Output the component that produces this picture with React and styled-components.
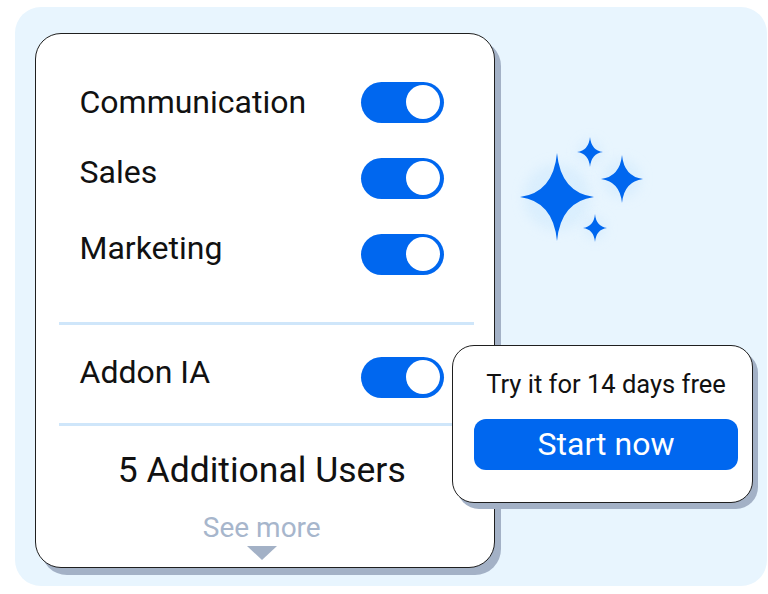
import React from 'react';
import styled, { createGlobalStyle } from 'styled-components';

const GlobalStyle = createGlobalStyle`
  * { box-sizing: border-box; }
  body {
    margin: 0;
    background: #ffffff;
    font-family: Roboto, "Liberation Sans", sans-serif;
    color: #111111;
  }
`;

const Page = styled.div`
  width: 768px;
  height: 594px;
  padding: 7px 1px 0 15px;
`;

const Panel = styled.div`
  position: relative;
  display: flex;
  align-items: flex-start;
  width: 752px;
  height: 579px;
  border-radius: 26px;
  background: #e8f5fe;
`;

const Card = styled.div`
  display: flex;
  flex-direction: column;
  width: 460px;
  height: 535px;
  margin: 26px 0 0 20px;
  padding: 30px 50px 0 43.5px;
  background: #ffffff;
  border: 1.5px solid #1f1f1f;
  border-radius: 26px;
  box-shadow: 6px 7px 0 #a3b1c6;
`;

const Row = styled.div`
  display: flex;
  align-items: center;
  justify-content: space-between;
  height: 76px;
`;

const Label = styled.span`
  margin-bottom: ${(p) => (p.$lift || 0) * 2}px;
  font-size: 32px;
  line-height: 1;
  color: #111111;
`;

const Track = styled.div`
  display: flex;
  align-items: center;
  justify-content: flex-end;
  width: 83px;
  height: 41px;
  padding-right: 4px;
  border-radius: 21px;
  background: #0067ef;
`;

const Knob = styled.div`
  width: 34px;
  height: 34px;
  border-radius: 50%;
  background: #ffffff;
`;

const Divider = styled.div`
  height: 3px;
  margin: ${(p) => p.$top}px -30px ${(p) => p.$bottom}px -21px;
  background: #cfe6fa;
`;

const Users = styled.div`
  margin-top: 27px;
  text-align: center;
  font-size: 35.5px;
  line-height: 1;
  color: #111111;
`;

const SeeMore = styled.div`
  display: flex;
  flex-direction: column;
  align-items: center;
  margin-top: 25px;
  font-size: 28px;
  line-height: 1;
  color: #a7b6cc;
`;

const Caret = styled.div`
  width: 0;
  height: 0;
  margin-top: 4px;
  border-left: 15px solid transparent;
  border-right: 15px solid transparent;
  border-top: 14px solid #a3b1c6;
`;

const Sparkles = styled.svg`
  display: block;
  margin: 123px 0 0 15px;
  overflow: visible;
`;

const Popup = styled.div`
  position: absolute;
  left: 437px;
  top: 338px;
  display: flex;
  flex-direction: column;
  align-items: stretch;
  width: 301px;
  height: 158px;
  padding: 26px 14px 0 21px;
  background: #ffffff;
  border: 1.5px solid #1f1f1f;
  border-radius: 22px;
  box-shadow: 5px 6px 0 #a3b1c6;
`;

const PopupText = styled.div`
  text-align: center;
  font-size: 25.5px;
  line-height: 1;
  color: #111111;
`;

const StartButton = styled.button`
  height: 51px;
  margin-top: 21px;
  border: none;
  border-radius: 12px;
  background: #0067ef;
  color: #ffffff;
  font-family: Roboto, "Liberation Sans", sans-serif;
  font-size: 32px;
  line-height: 1;
  cursor: pointer;
`;

const Toggle = () => (
  <Track>
    <Knob />
  </Track>
);

const Star = ({ cx, cy, rx, ry }) => {
  const k = 0.1;
  const d = `M ${cx} ${cy - ry}
    Q ${cx + rx * k} ${cy - ry * k} ${cx + rx} ${cy}
    Q ${cx + rx * k} ${cy + ry * k} ${cx} ${cy + ry}
    Q ${cx - rx * k} ${cy + ry * k} ${cx - rx} ${cy}
    Q ${cx - rx * k} ${cy - ry * k} ${cx} ${cy - ry} Z`;
  return (
    <g>
      <circle cx={cx} cy={cy} r={Math.min(rx, ry) * 0.9} fill="#cfe9fd" opacity="0.55" filter="url(#glow)" />
      <path d={d} fill="#0067ef" />
    </g>
  );
};

const features = [
  { name: 'Communication', lift: 0 },
  { name: 'Sales', lift: 6.5 },
  { name: 'Marketing', lift: 6.5 },
];

export default function App() {
  return (
    <Page>
      <GlobalStyle />
      <Panel>
        <Card>
          {features.map((f) => (
            <Row key={f.name}>
              <Label $lift={f.lift}>{f.name}</Label>
              <Toggle />
            </Row>
          ))}
          <Divider $top={30} $bottom={14} />
          <Row>
            <Label $lift={5.5}>Addon IA</Label>
            <Toggle />
          </Row>
          <Divider $top={8} $bottom={0} />
          <Users>5 Additional Users</Users>
          <SeeMore>
            See more
            <Caret />
          </SeeMore>
        </Card>
        <Sparkles width="140" height="120" viewBox="510 130 140 120">
          <defs>
            <filter id="glow" x="-1" y="-1" width="3" height="3">
              <feGaussianBlur stdDeviation="6" />
            </filter>
          </defs>
          <Star cx={557} cy={197} rx={37} ry={44} />
          <Star cx={590} cy={152} rx={13} ry={15} />
          <Star cx={622} cy={179} rx={21} ry={24} />
          <Star cx={595} cy={228} rx={12} ry={14} />
        </Sparkles>
        <Popup>
          <PopupText>Try it for 14 days free</PopupText>
          <StartButton>Start now</StartButton>
        </Popup>
      </Panel>
    </Page>
  );
}
